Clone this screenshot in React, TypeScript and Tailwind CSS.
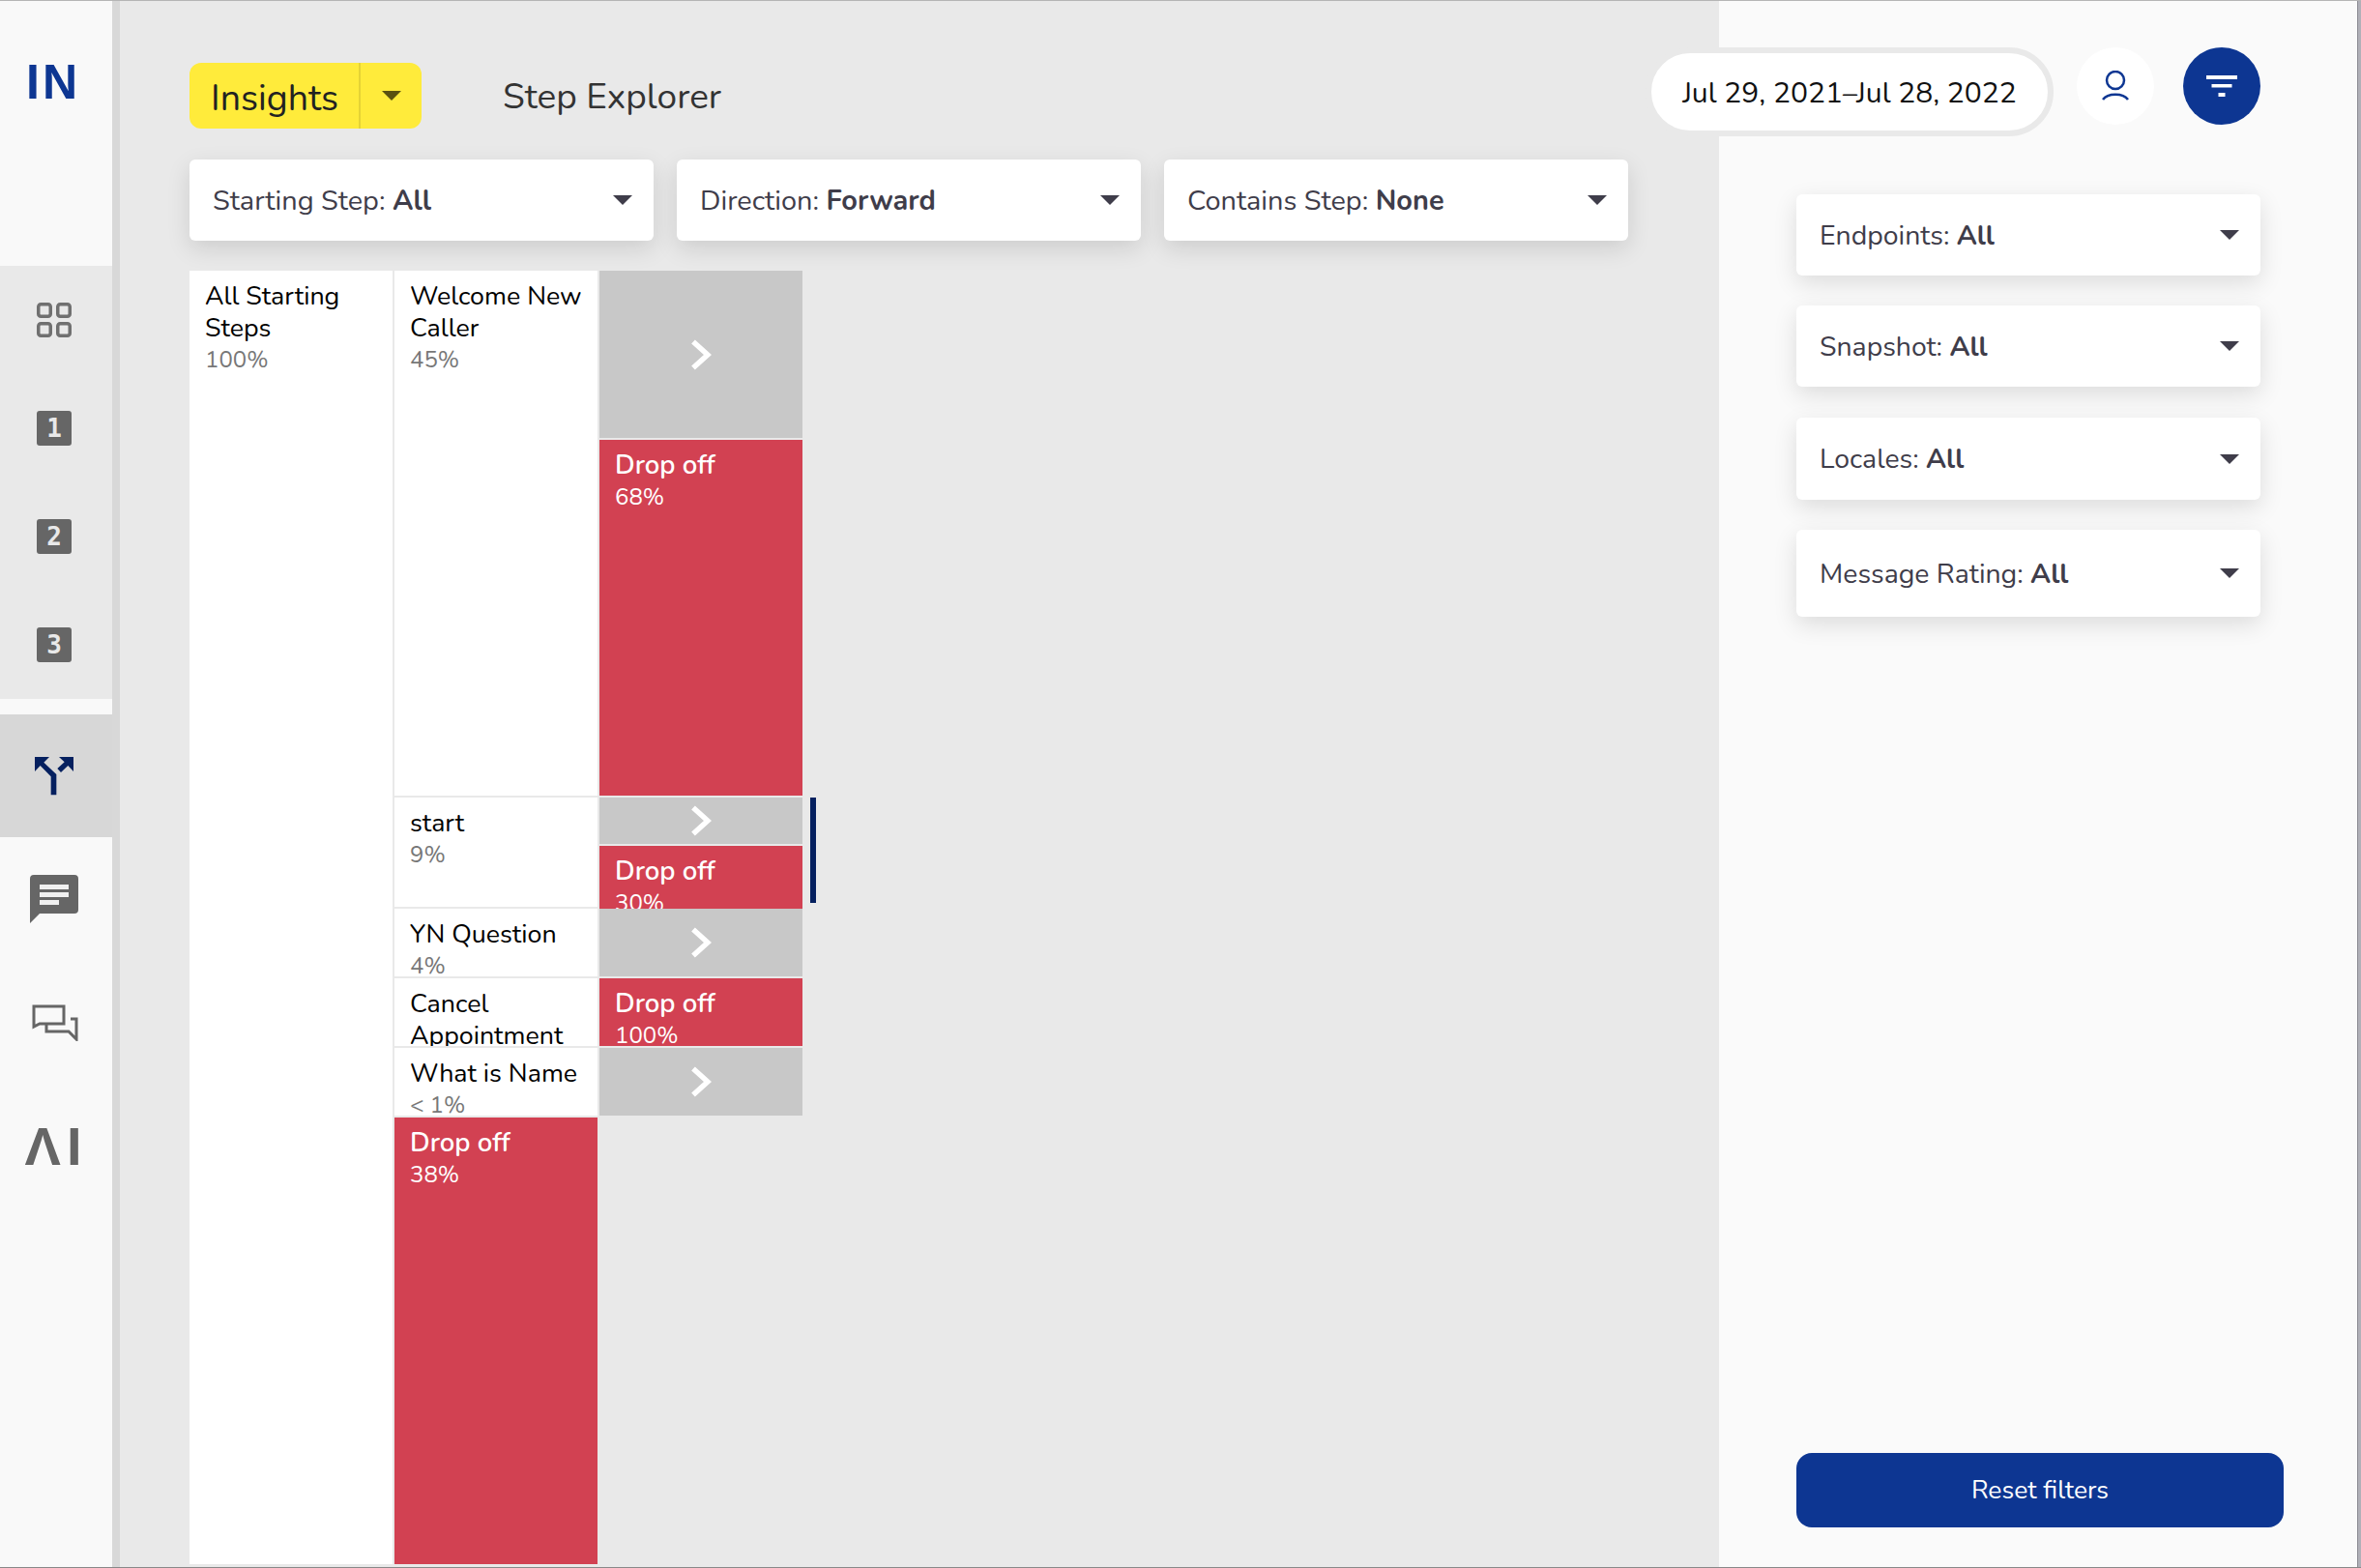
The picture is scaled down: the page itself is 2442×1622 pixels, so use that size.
import React from "react";

const font = { fontFamily: '"Nunito", "Lato", "Noto Sans", sans-serif' };

function Caret({ color = "#3f3d4a" }: { color?: string }) {
  return (
    <svg width="20" height="10" viewBox="0 0 20 10" className="shrink-0">
      <path d="M0 0 L20 0 L10 10 Z" fill={color} />
    </svg>
  );
}

function Select({ label, value, h = "h-[84px]", w = "w-[480px]", extra = "", size = "text-[28.4px]" }: { label: string; value: string; h?: string; w?: string; extra?: string; size?: string }) {
  return (
    <div className={`${h} ${w} ${extra} bg-white rounded-md shadow-[0_8px_24px_rgba(0,0,0,0.12)] flex items-center justify-between pl-6 pr-[22px] text-[#3f3d4a]`}>
      <span className={`${size} pt-[2px]`}>
        {label}: <span className="font-bold">{value}</span>
      </span>
      <Caret />
    </div>
  );
}

function Chevron() {
  return (
    <svg width="22" height="32" viewBox="0 0 22 32">
      <path d="M3 2.5 L18 16 L3 29.5" fill="none" stroke="#fff" strokeWidth="5.5" />
    </svg>
  );
}

function Cell({ name, pct, h }: { name: string; pct: string; h: string }) {
  return (
    <div className={`${h} bg-white pl-4 pr-1 pt-[10px] overflow-hidden text-black text-[26.8px] leading-[33px]`}>
      <div>{name}</div>
      <div className="text-[#777] text-[24px]">{pct}</div>
    </div>
  );
}

function Drop({ pct, h }: { pct: string; h: string }) {
  return (
    <div className={`${h} bg-[#d24152] pl-4 pt-[10px] overflow-hidden text-white text-[27.5px] leading-[33px] font-semibold`}>
      <div>Drop off</div>
      <div className="font-normal text-[24px]">{pct}</div>
    </div>
  );
}

function Go({ h }: { h: string }) {
  return (
    <div className={`${h} bg-[#c8c8c8] flex items-center justify-center`}>
      <Chevron />
    </div>
  );
}

function NumIcon({ n }: { n: string }) {
  return (
    <div className="h-[112px] flex items-center justify-center pr-1">
      <div className="w-9 h-9 rounded-[3px] bg-[#666] flex items-center justify-center text-[#e9e9e9] text-[26px] font-bold" style={{ fontFamily: '"DejaVu Sans Mono", monospace' }}>
        {n}
      </div>
    </div>
  );
}

export default function App() {
  return (
    <div className="w-[2442px] h-[1622px] flex overflow-hidden border-t border-t-[#b5b5b5] border-b border-b-[#888] bg-[#e9e9e9]" style={font}>
      {/* Sidebar */}
      <aside className="w-[124px] shrink-0 border-r-8 border-r-[#d8d8d8] flex flex-col bg-[#f9f9f9]">
        <div className="h-[274px] flex justify-center pt-[56px] pr-[6px]">
          <span className="text-[#0d3692] text-[50px] leading-[56px] font-bold tracking-[3px]" style={{ fontFamily: '"Liberation Sans", sans-serif' }}>IN</span>
        </div>
        <div className="bg-[#e9e9e9]">
          <div className="h-[112px] flex items-center justify-center pr-1">
            <svg width="36" height="36" viewBox="0 0 36 36" fill="none" stroke="#707070" strokeWidth="3.5">
              <rect x="1.75" y="1.75" width="12.5" height="12.5" rx="2.5" />
              <rect x="21.75" y="1.75" width="12.5" height="12.5" rx="2.5" />
              <rect x="1.75" y="21.75" width="12.5" height="12.5" rx="2.5" />
              <rect x="21.75" y="21.75" width="12.5" height="12.5" rx="2.5" />
            </svg>
          </div>
          <NumIcon n="1" />
          <NumIcon n="2" />
          <NumIcon n="3" />
        </div>
        <div className="h-4" />
        <div className="h-[127px] bg-[#d7d7d7] flex items-center justify-center pr-1">
          <svg width="40" height="40" viewBox="60 70 120 120" fill="#05205f">
            <path d="M60 70 H105 L88 87 L127 124 V188 H110 V131 L77 97 L60 115 Z" />
            <path d="M135 70 H180 V115 L163 97 L141 118 L130 106 L152 86 Z" />
          </svg>
        </div>
        <div className="h-32 flex items-center justify-center pr-1">
          <svg width="50" height="50" viewBox="0 0 50 50">
            <path d="M4 0 H46 a4 4 0 0 1 4 4 V36 a4 4 0 0 1 -4 4 H10 L0 50 V4 a4 4 0 0 1 4 -4 Z" fill="#666" />
            <path d="M10 10 H40 V15 H10 Z M10 18 H40 V23 H10 Z M10 26 H30 V31 H10 Z" fill="#f0f0f0" />
          </svg>
        </div>
        <div className="h-32 flex items-center justify-center pr-[2px]">
          <svg width="48" height="38" viewBox="0 0 48 38" fill="none" stroke="#666" strokeWidth="3">
            <path d="M2 2 H33 V20 H8 L2 23 Z" />
            <path d="M15 21 V28 H38 L46 36 V15 H40" />
          </svg>
        </div>
        <div className="h-32 flex items-center justify-center">
          <span className="text-[#666] text-[56px] leading-none font-bold tracking-[6px]" style={{ fontFamily: '"Liberation Sans", sans-serif' }}>ΛI</span>
        </div>
      </aside>

      {/* Main */}
      <main className="w-[1654px] shrink-0 pl-[72px] pt-[64px] flex flex-col">
        <div className="flex items-center h-[68px]">
          <div className="w-[240px] h-[68px] rounded-xl bg-[#ffeb3b] flex items-center text-[#222] text-[37.5px]">
            <div className="w-[177px] h-full pl-[22px] pt-[6px] flex items-center border-r-2 border-r-[#e5d335]">Insights</div>
            <div className="flex-1 flex justify-center">
              <Caret color="#5a5110" />
            </div>
          </div>
          <div className="ml-[84px] pt-[3px] text-[37px] text-[#333]">Step Explorer</div>
        </div>
        <div className="flex gap-6 mt-8">
          <Select label="Starting Step" value="All" size="text-[28.9px]" />
          <Select label="Direction" value="Forward" size="text-[28.9px]" />
          <Select label="Contains Step" value="None" size="text-[28.9px]" />
        </div>
        <div className="flex mt-[31px] flex-1 mb-[3px]">
          <div className="w-[210px] mr-[2px] bg-white pl-4 pr-2 pt-[10px] text-black text-[26.8px] leading-[33px]">
            <div>All Starting Steps</div>
            <div className="text-[#777] text-[24px]">100%</div>
          </div>
          <div className="w-[210px] mr-[2px] flex flex-col gap-[2px]">
            <Cell name="Welcome New Caller" pct="45%" h="h-[543px]" />
            <Cell name="start" pct="9%" h="h-[113px]" />
            <Cell name="YN Question" pct="4%" h="h-[70px]" />
            <Cell name="Cancel Appointment" pct="" h="h-[70px]" />
            <Cell name="What is Name" pct="< 1%" h="h-[70px]" />
            <Drop pct="38%" h="flex-1" />
          </div>
          <div className="w-[210px] flex flex-col">
            <Go h="h-[173px]" />
            <div className="h-[2px]" />
            <Drop pct="68%" h="h-[368px]" />
            <div className="h-[2px]" />
            <Go h="h-[48px]" />
            <div className="h-[2px]" />
            <Drop pct="30%" h="h-[65px]" />
            <Go h="h-[70px]" />
            <div className="h-[2px]" />
            <Drop pct="100%" h="h-[70px]" />
            <div className="h-[2px]" />
            <Go h="h-[70px]" />
          </div>
          <div className="w-[6px] h-[109px] ml-2 mt-[545px] bg-[#05205f]" />
        </div>
      </main>

      {/* Right panel */}
      <section className="flex-1 bg-[#fafafa] border-r-[3px] border-r-[#b0b0b8] shadow-[inset_-1px_0_0_#8a8a92] pl-20 pt-[48px] flex flex-col">
        <div className="flex items-start -ml-[156px]">
          <div className="w-[422px] h-[92px] rounded-full border-[6px] border-[#e9e9e9] bg-white flex items-center justify-center pt-[2px] text-[30px] text-[#111]">
            Jul 29, 2021–Jul 28, 2022
          </div>
          <div className="w-20 h-20 ml-6 rounded-full bg-white flex items-center justify-center">
            <svg width="28" height="32" viewBox="0 0 28 32" fill="none" stroke="#0d3692" strokeWidth="2.5">
              <circle cx="14" cy="10" r="9" />
              <path d="M1 30 C6 23 22 23 27 30" />
            </svg>
          </div>
          <div className="w-20 h-20 ml-[30px] rounded-full bg-[#0d3692] flex items-center justify-center">
            <svg width="32" height="22" viewBox="0 0 32 22" fill="#fff">
              <rect x="0" y="0" width="32" height="4" />
              <rect x="5.5" y="9" width="21" height="3.5" />
              <rect x="12.5" y="18" width="7" height="4" />
            </svg>
          </div>
        </div>
        <div className="mt-[60px] flex flex-col gap-[31px]">
          <Select label="Endpoints" value="All" />
          <Select label="Snapshot" value="All" />
          <Select label="Locales" value="All" h="h-[85px]" extra="mt-px" />
          <Select label="Message Rating" value="All" h="h-[90px]" />
        </div>
        <button className="mt-auto mb-[41px] w-[504px] h-[77px] rounded-2xl bg-[#0d3692] text-white text-[26.5px]">Reset filters</button>
      </section>
    </div>
  );
}
